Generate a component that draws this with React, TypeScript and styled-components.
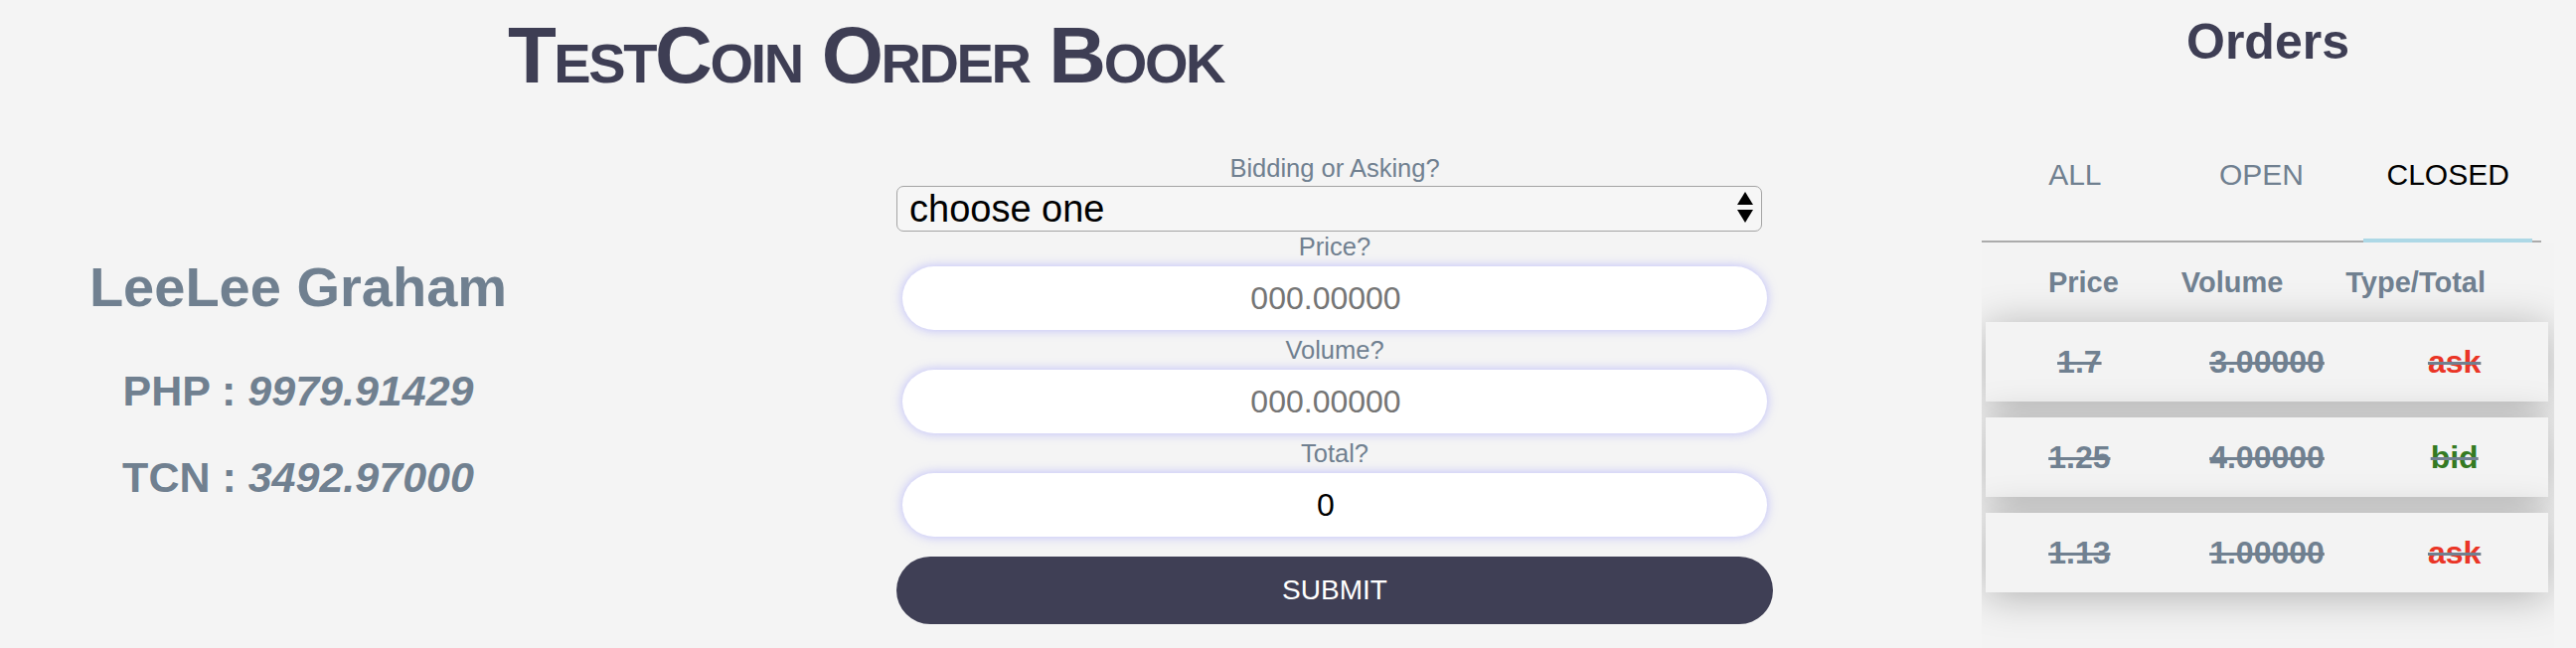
import styled, { createGlobalStyle } from "styled-components";

const GlobalStyle = createGlobalStyle`
  body {
    margin: 0;
    background: #f4f4f4;
    font-family: "Liberation Sans", Arial, Helvetica, sans-serif;
  }
`;

const slate = "#708090";
const ink = "#3e3e54";

const Page = styled.div`
  display: flex;
  width: 2592px;
  height: 652px;
  overflow: hidden;
`;

const Main = styled.main`
  width: 1994px;
  flex-shrink: 0;
`;

const Title = styled.h1`
  width: 1742px;
  margin: 10px 0 0;
  text-align: center;
  font-size: 80px;
  line-height: 92px;
  font-weight: 700;
  font-variant: small-caps;
  letter-spacing: -2.4px;
  color: ${ink};
`;

const Content = styled.div`
  display: flex;
  align-items: flex-start;
`;

const Account = styled.section`
  width: 600px;
  padding-top: 155px;
  text-align: center;
  color: ${slate};
`;

const Name = styled.h2`
  margin: 0 0 47px;
  font-size: 56px;
  line-height: 64px;
  font-weight: 700;
`;

const Balance = styled.p`
  margin: 0 0 37px;
  font-size: 43px;
  line-height: 50px;
  font-weight: 700;

  em {
    font-style: italic;
  }
`;

const OrderForm = styled.form`
  width: 882px;
  margin: 53px 0 0 302px;
`;

const Label = styled.label`
  display: block;
  font-size: 25.5px;
  line-height: 28px;
  color: ${slate};
  text-align: center;
`;

const SelectBox = styled.div`
  position: relative;
  width: 871px;
  margin: 4px 0 1px;
`;

const Select = styled.select`
  appearance: none;
  display: block;
  width: 100%;
  height: 46px;
  padding: 0 12px;
  border: 1.5px solid #a4a4a4;
  border-radius: 7px;
  background: #f6f6f6;
  color: #000;
  font-family: inherit;
  font-size: 38px;
  outline: none;
`;

const Arrows = styled.svg`
  position: absolute;
  right: 9px;
  top: 6px;
  pointer-events: none;
`;

const Field = styled.input`
  display: block;
  box-sizing: border-box;
  width: 870px;
  height: 64px;
  margin: 6px 6px;
  padding: 0 18px 0 0;
  border: none;
  border-radius: 32px;
  background: #fff;
  box-shadow: 0 0 10px 1px rgba(150, 150, 255, 0.5);
  text-align: center;
  font-family: inherit;
  font-size: 32px;
  color: #000;
  outline: none;

  &::placeholder {
    color: #757575;
  }
`;

const Submit = styled.button`
  display: block;
  width: 882px;
  height: 68px;
  margin-top: 20px;
  border: none;
  border-radius: 34px;
  background: #3f3f55;
  color: #fff;
  font-family: inherit;
  font-size: 28px;
  cursor: pointer;
`;

const Sidebar = styled.aside`
  width: 576px;
  flex-shrink: 0;
  display: flex;
  flex-direction: column;
  text-align: center;
`;

const OrdersTitle = styled.h2`
  margin: 13px 0 0;
  font-size: 50px;
  line-height: 58px;
  font-weight: 700;
  color: ${ink};
`;

const Tabs = styled.div`
  display: grid;
  grid-template-columns: repeat(3, 1fr);
  width: 563px;
  height: 132px;
  margin-top: 39px;
  border-bottom: 2px solid #ababab;
`;

const Tab = styled.div<{ $active?: boolean }>`
  position: relative;
  display: flex;
  align-items: center;
  justify-content: center;
  font-size: 30px;
  color: ${(p) => (p.$active ? "#000" : slate)};

  &::after {
    content: "";
    display: ${(p) => (p.$active ? "block" : "none")};
    position: absolute;
    left: 9px;
    right: 9px;
    bottom: -2px;
    height: 4px;
    background: #add8e6;
  }
`;

const Table = styled.div`
  flex: 1;
  overflow: hidden;
  padding: 0 6px 0 4px;
  background: #f3f3f3;
`;

const HeaderRow = styled.div`
  display: flex;
  justify-content: space-evenly;
  align-items: center;
  height: 80px;
  font-size: 29px;
  font-weight: 700;
  color: ${slate};
`;

const OrderRow = styled.div`
  display: grid;
  grid-template-columns: repeat(3, 1fr);
  align-items: center;
  height: 80px;
  margin-bottom: 16px;
  background: #f3f3f3;
  box-shadow: 0 4px 40px rgba(0, 0, 0, 0.28);
  font-size: 32px;
  font-weight: 700;
  color: ${slate};
  text-decoration: line-through;
`;

const Kind = styled.span<{ $type: "ask" | "bid" }>`
  color: ${(p) => (p.$type === "ask" ? "#ea3526" : "#347a22")};
`;

const orders: { price: string; volume: string; type: "ask" | "bid" }[] = [
  { price: "1.7", volume: "3.00000", type: "ask" },
  { price: "1.25", volume: "4.00000", type: "bid" },
  { price: "1.13", volume: "1.00000", type: "ask" },
];

export default function App() {
  return (
    <>
      <GlobalStyle />
      <Page>
        <Main>
          <Title>TestCoin Order Book</Title>
          <Content>
            <Account>
              <Name>LeeLee Graham</Name>
              <Balance>
                PHP : <em>9979.91429</em>
              </Balance>
              <Balance>
                TCN : <em>3492.97000</em>
              </Balance>
            </Account>
            <OrderForm onSubmit={(e) => e.preventDefault()}>
              <Label htmlFor="side">Bidding or Asking?</Label>
              <SelectBox>
                <Select id="side" defaultValue="">
                  <option value="">choose one</option>
                  <option value="bid">bid</option>
                  <option value="ask">ask</option>
                </Select>
                <Arrows width="16" height="32" viewBox="0 0 16 32">
                  <path d="M8 0 L16 13 L0 13 Z" fill="#000" />
                  <path d="M0 18 L16 18 L8 31 Z" fill="#000" />
                </Arrows>
              </SelectBox>
              <Label htmlFor="price">Price?</Label>
              <Field id="price" placeholder="000.00000" />
              <Label htmlFor="volume">Volume?</Label>
              <Field id="volume" placeholder="000.00000" />
              <Label htmlFor="total">Total?</Label>
              <Field id="total" defaultValue="0" readOnly />
              <Submit type="submit">SUBMIT</Submit>
            </OrderForm>
          </Content>
        </Main>
        <Sidebar>
          <OrdersTitle>Orders</OrdersTitle>
          <Tabs>
            <Tab>ALL</Tab>
            <Tab>OPEN</Tab>
            <Tab $active>CLOSED</Tab>
          </Tabs>
          <Table>
            <HeaderRow>
              <span>Price</span>
              <span>Volume</span>
              <span>Type/Total</span>
            </HeaderRow>
            {orders.map((o) => (
              <OrderRow key={o.price}>
                <span>{o.price}</span>
                <span>{o.volume}</span>
                <span>
                  <Kind $type={o.type}>{o.type}</Kind>
                </span>
              </OrderRow>
            ))}
          </Table>
        </Sidebar>
      </Page>
    </>
  );
}
